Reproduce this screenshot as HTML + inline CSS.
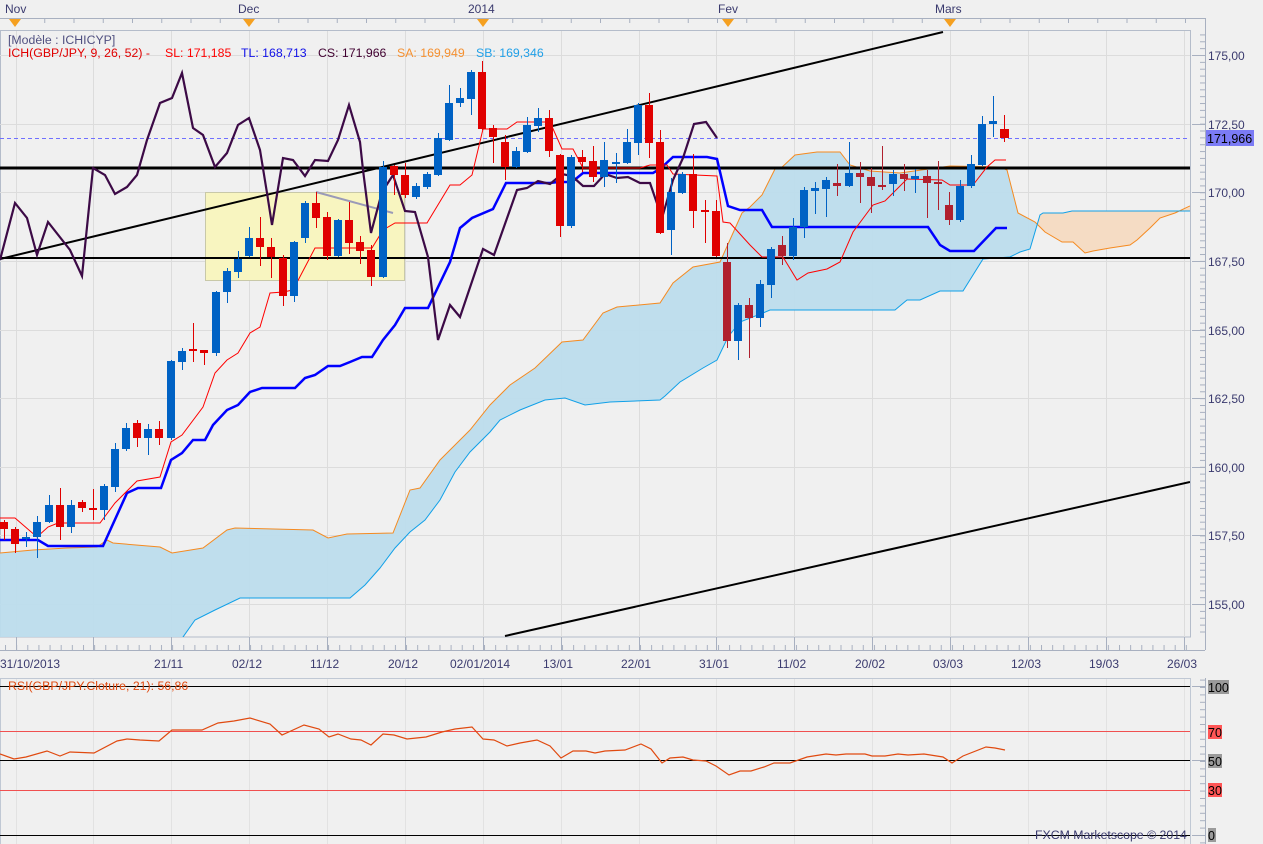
<!DOCTYPE html>
<html><head><meta charset="utf-8"><style>
html,body{margin:0;padding:0;background:#f0f0f0;}
svg{display:block;font-family:"Liberation Sans","DejaVu Sans",sans-serif;}
.ax{fill:#3a3a6e;font-size:12px;}
</style></head><body>
<svg width="1263" height="844" viewBox="0 0 1263 844" xmlns="http://www.w3.org/2000/svg">
<defs>
<clipPath id="cc"><rect x="0" y="31" width="1190" height="606"/></clipPath>
<clipPath id="cl"><rect x="0" y="0" width="1037" height="844"/></clipPath>
<clipPath id="cr"><rect x="1037" y="0" width="300" height="844"/></clipPath>
<pattern id="pr" x="0" y="55" width="10" height="6.863" patternUnits="userSpaceOnUse"><line x1="0" y1="0.5" x2="10" y2="0.5" stroke="#a8b0c0" stroke-width="1"/></pattern>
<pattern id="prs" x="0" y="687" width="10" height="7.4" patternUnits="userSpaceOnUse"><line x1="0" y1="0.5" x2="10" y2="0.5" stroke="#a8b0c0" stroke-width="1"/></pattern>
<pattern id="pb" x="5" y="0" width="11.14" height="20" patternUnits="userSpaceOnUse"><line x1="0.5" y1="0" x2="0.5" y2="20" stroke="#a8b0c0" stroke-width="1"/></pattern>
<pattern id="pt" x="15" y="0" width="29.25" height="20" patternUnits="userSpaceOnUse"><line x1="0.5" y1="0" x2="0.5" y2="20" stroke="#a8b0c0" stroke-width="1"/></pattern>
</defs>
<rect width="1263" height="844" fill="#f0f0f0"/>

<!-- top axis -->
<text class="ax" x="5" y="13">Nov</text>
<text class="ax" x="238" y="13">Dec</text>
<text class="ax" x="468" y="13">2014</text>
<text class="ax" x="718" y="13">Fev</text>
<text class="ax" x="935" y="13">Mars</text>
<line x1="0" y1="18.5" x2="1205" y2="18.5" stroke="#a8b0c0"/>
<rect x="0" y="19" width="1205" height="4" fill="url(#pt)"/>
<line x1="1205.5" y1="18" x2="1205.5" y2="637" stroke="#a8b0c0"/>
<g fill="#f5a020">
<polygon points="9,19 21,19 15,27"/><polygon points="243,19 255,19 249,27"/><polygon points="477,19 489,19 483,27"/><polygon points="722,19 734,19 728,27"/><polygon points="944,19 956,19 950,27"/>
</g>
<rect x="0.5" y="30.5" width="1190" height="606.5" fill="none" stroke="#b4bcca"/>

<!-- right axis -->
<rect x="1200" y="32" width="5" height="605" fill="url(#pr)"/>
<g stroke="#a8b0c0">
<line x1="1192" y1="55.5" x2="1205" y2="55.5"/><line x1="1192" y1="124.5" x2="1205" y2="124.5"/><line x1="1192" y1="192.5" x2="1205" y2="192.5"/><line x1="1192" y1="261.5" x2="1205" y2="261.5"/><line x1="1192" y1="330.5" x2="1205" y2="330.5"/><line x1="1192" y1="398.5" x2="1205" y2="398.5"/><line x1="1192" y1="467.5" x2="1205" y2="467.5"/><line x1="1192" y1="535.5" x2="1205" y2="535.5"/><line x1="1192" y1="604.5" x2="1205" y2="604.5"/>
</g>
<g class="ax">
<text x="1208" y="60">175,00</text><text x="1208" y="129">172,50</text><text x="1208" y="197">170,00</text><text x="1208" y="266">167,50</text><text x="1208" y="335">165,00</text><text x="1208" y="403">162,50</text><text x="1208" y="472">160,00</text><text x="1208" y="540">157,50</text><text x="1208" y="609">155,00</text>
</g>
<rect x="1206" y="130" width="48" height="16" fill="#7b7bf5"/>
<text x="1207" y="143" font-size="12.5" fill="#000">171,966</text>

<g clip-path="url(#cc)">
<!-- grid -->
<g stroke="#dcdcdc" stroke-width="1">
<line x1="0" y1="55.5" x2="1190" y2="55.5"/><line x1="0" y1="124.5" x2="1190" y2="124.5"/><line x1="0" y1="192.5" x2="1190" y2="192.5"/><line x1="0" y1="261.5" x2="1190" y2="261.5"/><line x1="0" y1="330.5" x2="1190" y2="330.5"/><line x1="0" y1="398.5" x2="1190" y2="398.5"/><line x1="0" y1="467.5" x2="1190" y2="467.5"/><line x1="0" y1="535.5" x2="1190" y2="535.5"/><line x1="0" y1="604.5" x2="1190" y2="604.5"/>
<line x1="16.5" y1="31" x2="16.5" y2="637"/><line x1="93.5" y1="31" x2="93.5" y2="637"/><line x1="171.5" y1="31" x2="171.5" y2="637"/><line x1="249.5" y1="31" x2="249.5" y2="637"/><line x1="327.5" y1="31" x2="327.5" y2="637"/><line x1="405.5" y1="31" x2="405.5" y2="637"/><line x1="483.5" y1="31" x2="483.5" y2="637"/><line x1="561.5" y1="31" x2="561.5" y2="637"/><line x1="639.5" y1="31" x2="639.5" y2="637"/><line x1="716.5" y1="31" x2="716.5" y2="637"/><line x1="794.5" y1="31" x2="794.5" y2="637"/><line x1="872.5" y1="31" x2="872.5" y2="637"/><line x1="950.5" y1="31" x2="950.5" y2="637"/><line x1="1028.5" y1="31" x2="1028.5" y2="637"/><line x1="1106.5" y1="31" x2="1106.5" y2="637"/><line x1="1184.5" y1="31" x2="1184.5" y2="637"/>
</g>

<!-- cloud -->
<g>
<polygon clip-path="url(#cl)" fill="#bcdcec" fill-opacity="0.95" points="0,553 33,550 67,548 97,547 107,540 113,543 160,547 172,553 203,548 227,530 235,528 313,530 328,538 347,534 393,533 410,490 420,488 440,460 455,445 470,430 490,405 510,385 535,368 562,342 583,340 603,313 617,307 660,303 673,283 693,267 720,262 733,233 742,213 750,207 762,195 775,169 780,169 795,155 817,152 840,152 850,165 870,171 900,173 950,166 1000,167 1007,170 1018,213 1035,222 1040,227 1040,215 1030,249 1020,252 1010,257 983,259 963,291 940,291 920,300 907,300 895,310 770,310 763,313 740,322 728,337 717,360 703,368 680,382 665,396 660,400 610,402 585,405 565,398 545,400 520,410 500,420 490,432 470,452 455,472 440,500 425,520 410,532 395,548 380,568 365,585 350,598 240,598 215,610 195,620 183,637 170,660 0,700"/>
<polygon clip-path="url(#cr)" fill="#f5dcc4" points="1035,222 1040,227 1045,232 1062,242 1073,242 1085,253 1093,251 1110,248 1130,245 1137,240 1150,228 1160,218 1175,213 1190,207 1190,211 1072,211 1063,213 1043,213 1040,215 1030,249"/>
<polyline fill="none" stroke="#f58a20" stroke-width="1" points="0,553 33,550 67,548 97,547 107,540 113,543 160,547 172,553 203,548 227,530 235,528 313,530 328,538 347,534 393,533 410,490 420,488 440,460 455,445 470,430 490,405 510,385 535,368 562,342 583,340 603,313 617,307 660,303 673,283 693,267 720,262 733,233 742,213 750,207 762,195 775,169 780,169 795,155 817,152 840,152 850,165 870,171 900,173 950,166 1000,167 1007,170 1018,213 1035,222 1040,227 1045,232 1062,242 1073,242 1085,253 1093,251 1110,248 1130,245 1137,240 1150,228 1160,218 1175,213 1190,206"/>
<polyline fill="none" stroke="#10a0e8" stroke-width="1" points="170,660 183,637 195,620 215,610 240,598 350,598 365,585 380,568 395,548 410,532 425,520 440,500 455,472 470,452 490,432 500,420 520,410 545,400 565,398 585,405 610,402 660,400 665,396 680,382 703,368 717,360 728,337 740,322 763,313 770,310 895,310 907,300 920,300 940,291 963,291 983,259 1010,257 1020,252 1030,249 1040,215 1043,213 1063,213 1072,211 1190,211"/>
</g>

<!-- yellow box -->
<rect x="205.5" y="192.5" width="199" height="88" fill="#f8f5c0" stroke="#c8c8a8"/>

<!-- horizontal & trend lines -->
<line x1="0" y1="138.5" x2="1190" y2="138.5" stroke="#7070ff" stroke-dasharray="4,3"/>
<line x1="0" y1="168" x2="1190" y2="168" stroke="#000" stroke-width="3"/>
<line x1="0" y1="258" x2="1190" y2="258" stroke="#000" stroke-width="2"/>
<line x1="0" y1="259" x2="943" y2="32" stroke="#000" stroke-width="2"/>
<line x1="505" y1="636" x2="1190" y2="482" stroke="#000" stroke-width="2"/>
<line x1="316" y1="192" x2="393" y2="213" stroke="#9a9ab8" stroke-width="2"/>

<!-- kijun -->
<polyline fill="none" stroke="#0000ff" stroke-width="2.5" points="0,540 38,540 48,546 103,546 127,493 138,488 161,488 171,460 182,453 193,440 205,440 213,425 227,410 238,405 250,392 262,388 295,388 305,378 315,375 328,366 340,366 350,362 362,357 372,357 383,340 395,325 405,308 428,308 450,262 460,228 472,218 493,209 506,183 550,183 558,182 572,182 583,173 653,173 660,169 673,157 707,157 717,159 728,206 740,210 762,210 772,227 928,227 940,245 950,251 974,251 996,228 1007,228"/>
<!-- tenkan -->
<polyline fill="none" stroke="#ff0000" stroke-width="1" points="0,518 15,518 37,537 48,527 58,523 100,523 115,503 137,481 160,477 171,442 182,435 203,407 215,373 227,360 238,353 250,333 260,327 270,293 283,292 293,290 315,248 372,248 383,230 395,223 427,223 450,185 460,185 472,175 483,129 507,129 517,122 550,122 562,149 573,149 583,168 640,168 650,165 667,165 673,174 717,176 723,222 730,223 750,245 762,257 783,257 797,280 808,273 827,269 840,262 853,232 873,205 885,201 907,179 942,180 950,185 973,185 987,167 995,160 1006,160"/>
<!-- chikou -->
<polyline fill="none" stroke="#3c0a46" stroke-width="2.2" points="0,260 15,203 27,218 37,255 48,222 70,250 82,276 93,168 105,175 115,194 127,187 137,175 147,140 160,103 172,98 182,73 193,128 203,135 215,167 227,153 238,125 249,118 260,150 267,193 272,225 283,158 293,160 305,176 315,160 328,161 338,140 349,105 360,142 363,170 371,233 382,192 393,175 405,211 415,212 428,257 438,340 450,305 460,317 483,249 494,255 517,190 527,188 538,181 550,184 562,174 572,176 583,186 594,186 605,174 617,178 628,177 640,183 650,183 662,218 673,180 683,158 694,124 706,122 717,138"/>

<!-- candles -->
<g stroke-width="1">
<path stroke="#e00000" d="M4.5 520V540M15.5 527V553M60.5 488V540M82.5 500V512M93.5 489V520M137.5 420V447M159.5 421V445M193.5 323V362M204.5 350V365M260.5 217V266M271.5 238V278M283.5 255V306M316.5 192V228M327.5 212V260M349.5 202V254M360.5 236V264M371.5 245V286M394.5 165V195M405.5 163V198M482.5 61V130M493.5 125V163M505.5 135V180M549.5 110V157M560.5 154V237M582.5 150V172M593.5 146V182M649.5 93V158M660.5 130V234M693.5 154V228M705.5 200V243M716.5 200V257M1004.5 115V142"/>
<path stroke="#b0202e" d="M727.5 243V348M749.5 298V358M782.5 236V265M837.5 164V196M860.5 162V203M871.5 168V213M882.5 146V190M904.5 164V191M927.5 170V218M938.5 161V210M949.5 192V225"/>
<path stroke="#0062c4" d="M26.5 532V547M37.5 516V558M49.5 495V523M71.5 500V533M104.5 484V520M115.5 443V492M126.5 423V451M148.5 424V455M171.5 360V440M182.5 348V370M216.5 291V356M227.5 268V303M238.5 251V278M249.5 227V257M294.5 241V302M305.5 201V243M338.5 219V257M383.5 161V278M416.5 183V199M427.5 172V189M438.5 133V176M449.5 85V141M460.5 88V107M471.5 70V115M516.5 147V168M527.5 117V153M538.5 108V132M571.5 155V228M604.5 142V187M616.5 153V183M627.5 129V164M638.5 103V155M671.5 178V255M682.5 172V194M738.5 303V360M760.5 280V327M771.5 247V298M793.5 218V260M804.5 187V238M815.5 182V214M826.5 177V217M849.5 142V187M893.5 170V196M915.5 169V193M960.5 180V222M971.5 155V188M982.5 116V166M993.5 96V137"/>
</g>
<g fill="#e00000">
<rect x="0" y="522" width="8" height="7"/><rect x="11" y="529" width="8" height="15"/><rect x="56" y="505" width="8" height="22"/><rect x="78" y="502" width="8" height="6"/><rect x="89" y="508" width="8" height="2"/><rect x="133" y="423" width="8" height="15"/><rect x="155" y="429" width="8" height="9"/><rect x="189" y="349" width="8" height="2"/><rect x="200" y="350" width="8" height="3"/><rect x="256" y="238" width="8" height="9"/><rect x="267" y="247" width="8" height="10"/><rect x="279" y="258" width="8" height="38"/><rect x="312" y="203" width="8" height="15"/><rect x="323" y="217" width="8" height="39"/><rect x="345" y="220" width="8" height="23"/><rect x="356" y="242" width="8" height="9"/><rect x="367" y="250" width="8" height="27"/><rect x="390" y="166" width="8" height="9"/><rect x="401" y="175" width="8" height="20"/><rect x="478" y="72" width="8" height="57"/><rect x="489" y="128" width="8" height="9"/><rect x="501" y="142" width="8" height="25"/><rect x="545" y="118" width="8" height="33"/><rect x="556" y="155" width="8" height="71"/><rect x="578" y="157" width="8" height="5"/><rect x="589" y="161" width="8" height="16"/><rect x="645" y="105" width="8" height="38"/><rect x="656" y="142" width="8" height="91"/><rect x="689" y="174" width="8" height="37"/><rect x="701" y="210" width="8" height="2"/><rect x="712" y="211" width="8" height="45"/><rect x="1000" y="129" width="9" height="9"/>
</g>
<g fill="#b0202e">
<rect x="723" y="262" width="8" height="79"/><rect x="745" y="305" width="8" height="13"/><rect x="778" y="245" width="8" height="11"/><rect x="833" y="183" width="8" height="3"/><rect x="856" y="173" width="8" height="4"/><rect x="867" y="177" width="8" height="9"/><rect x="878" y="185" width="8" height="2"/><rect x="900" y="174" width="8" height="5"/><rect x="923" y="176" width="8" height="7"/><rect x="934" y="182" width="8" height="2"/><rect x="945" y="205" width="8" height="15"/>
</g>
<g fill="#0062c4">
<rect x="22" y="537" width="8" height="2"/><rect x="33" y="522" width="8" height="15"/><rect x="45" y="505" width="8" height="17"/><rect x="67" y="505" width="8" height="22"/><rect x="100" y="486" width="8" height="24"/><rect x="111" y="449" width="8" height="38"/><rect x="122" y="428" width="8" height="21"/><rect x="144" y="429" width="8" height="9"/><rect x="167" y="361" width="8" height="77"/><rect x="178" y="351" width="8" height="11"/><rect x="212" y="292" width="8" height="61"/><rect x="223" y="271" width="8" height="21"/><rect x="234" y="259" width="8" height="13"/><rect x="245" y="238" width="8" height="18"/><rect x="290" y="242" width="8" height="54"/><rect x="301" y="203" width="8" height="35"/><rect x="334" y="220" width="8" height="36"/><rect x="379" y="167" width="8" height="110"/><rect x="412" y="186" width="8" height="11"/><rect x="423" y="174" width="8" height="13"/><rect x="434" y="138" width="8" height="37"/><rect x="445" y="103" width="8" height="37"/><rect x="456" y="98" width="8" height="5"/><rect x="467" y="72" width="8" height="27"/><rect x="512" y="151" width="8" height="16"/><rect x="523" y="125" width="8" height="27"/><rect x="534" y="118" width="8" height="8"/><rect x="567" y="157" width="8" height="69"/><rect x="600" y="160" width="8" height="17"/><rect x="612" y="162" width="8" height="2"/><rect x="623" y="142" width="8" height="21"/><rect x="634" y="105" width="8" height="38"/><rect x="667" y="192" width="8" height="38"/><rect x="678" y="174" width="8" height="19"/><rect x="734" y="305" width="8" height="36"/><rect x="756" y="284" width="8" height="34"/><rect x="767" y="249" width="8" height="36"/><rect x="789" y="227" width="8" height="29"/><rect x="800" y="190" width="8" height="37"/><rect x="811" y="188" width="8" height="3"/><rect x="822" y="180" width="8" height="9"/><rect x="845" y="173" width="8" height="13"/><rect x="889" y="174" width="8" height="10"/><rect x="911" y="176" width="8" height="3"/><rect x="956" y="186" width="8" height="34"/><rect x="967" y="164" width="8" height="22"/><rect x="978" y="124" width="8" height="41"/><rect x="989" y="121" width="8" height="3"/>
</g>
</g>

<!-- legend -->
<text x="8" y="44" font-size="12.3" fill="#505080">[Modèle : ICHICYP]</text>
<text x="8" y="57" font-size="12.3" fill="#e00000">ICH(GBP/JPY, 9, 26, 52) -</text>
<text x="165" y="57" font-size="12.3" fill="#ff0000">SL: 171,185</text>
<text x="241" y="57" font-size="12.3" fill="#1010e8">TL: 168,713</text>
<text x="318" y="57" font-size="12.3" fill="#400030">CS: 171,966</text>
<text x="397" y="57" font-size="12.3" fill="#f59030">SA: 169,949</text>
<text x="476" y="57" font-size="12.3" fill="#20a0e8">SB: 169,346</text>

<!-- bottom axis -->
<rect x="0" y="645" width="1190" height="5" fill="url(#pb)"/>
<g stroke="#a8b0c0">
<line x1="0" y1="650.5" x2="1205" y2="650.5"/>
<path d="M16.5 637V650M93.5 637V650M171.5 637V650M249.5 637V650M327.5 637V650M405.5 637V650M483.5 637V650M561.5 637V650M639.5 637V650M716.5 637V650M794.5 637V650M872.5 637V650M950.5 637V650M1028.5 637V650M1106.5 637V650M1184.5 637V650"/>
<line x1="1205.5" y1="637" x2="1205.5" y2="650"/>
</g>
<g class="ax">
<text x="0" y="668">31/10/2013</text>
<text x="154" y="668">21/11</text><text x="232" y="668">02/12</text><text x="310" y="668">11/12</text><text x="388" y="668">20/12</text>
<text x="450" y="668">02/01/2014</text><text x="543" y="668">13/01</text><text x="621" y="668">22/01</text><text x="699" y="668">31/01</text><text x="777" y="668">11/02</text><text x="855" y="668">20/02</text><text x="933" y="668">03/03</text><text x="1011" y="668">12/03</text><text x="1089" y="668">19/03</text><text x="1167" y="668">26/03</text>
</g>

<!-- RSI panel -->
<rect x="0.5" y="678.5" width="1190" height="166" fill="none" stroke="#c0c8d4"/>
<g stroke="#e2e2e2">
<path d="M16.5 679V844M93.5 679V844M171.5 679V844M249.5 679V844M327.5 679V844M405.5 679V844M483.5 679V844M561.5 679V844M639.5 679V844M716.5 679V844M794.5 679V844M872.5 679V844M950.5 679V844M1028.5 679V844M1106.5 679V844M1184.5 679V844"/>
</g>
<line x1="0" y1="686.5" x2="1190" y2="686.5" stroke="#000"/>
<line x1="0" y1="731.5" x2="1190" y2="731.5" stroke="#f05050"/>
<line x1="0" y1="760.5" x2="1190" y2="760.5" stroke="#000"/>
<line x1="0" y1="790.5" x2="1190" y2="790.5" stroke="#f05050"/>
<line x1="0" y1="835.5" x2="1190" y2="835.5" stroke="#000"/>
<polyline fill="none" stroke="#e04a10" stroke-width="1.2" points="0,754 14,759 26,757 47,751 60,756 70,752 94,753 117,741 127,739 140,740 159,741 172,730 202,730 218,723 234,721 250,718 270,724 282,735 304,725 319,729 329,737 338,734 351,739 361,740 371,745 383,734 394,735 407,739 426,737 442,732 455,729 472,727 483,739 494,740 507,746 520,743 537,740 550,746 561,758 573,751 586,751 595,753 605,751 625,750 641,744 651,749 662,763 670,758 683,757 693,760 706,761 716,766 729,775 740,771 751,771 764,767 774,763 790,763 807,757 826,754 836,755 846,754 865,754 872,756 885,756 898,754 908,755 924,754 943,757 952,763 963,756 986,747 995,748 1005,750"/>
<text x="8" y="690" font-size="12.3" fill="#e04a10">RSI(GBP/JPY.Cloture, 21): 56,86</text>
<text x="1035" y="839" font-size="12.3" fill="#3a3a6e">FXCM Marketscope © 2014</text>
<rect x="1200" y="679" width="5" height="165" fill="url(#prs)"/>
<line x1="1205.5" y1="678" x2="1205.5" y2="844" stroke="#a8b0c0"/>
<g stroke="#a8b0c0"><path d="M1192 686.5H1205M1192 760.5H1205M1192 835.5H1205"/></g>
<rect x="1208" y="680" width="21" height="14" fill="#9a9a9a"/><text x="1208" y="692" font-size="12.5" fill="#000">100</text>
<rect x="1208" y="725" width="14" height="14" fill="#ff5555"/><text x="1208" y="737" font-size="12.5" fill="#000">70</text>
<rect x="1208" y="754" width="14" height="14" fill="#9a9a9a"/><text x="1208" y="766" font-size="12.5" fill="#000">50</text>
<rect x="1208" y="783" width="14" height="14" fill="#ff5555"/><text x="1208" y="795" font-size="12.5" fill="#000">30</text>
<rect x="1208" y="828" width="8" height="14" fill="#9a9a9a"/><text x="1208" y="840" font-size="12.5" fill="#000">0</text>
</svg>
</body></html>
